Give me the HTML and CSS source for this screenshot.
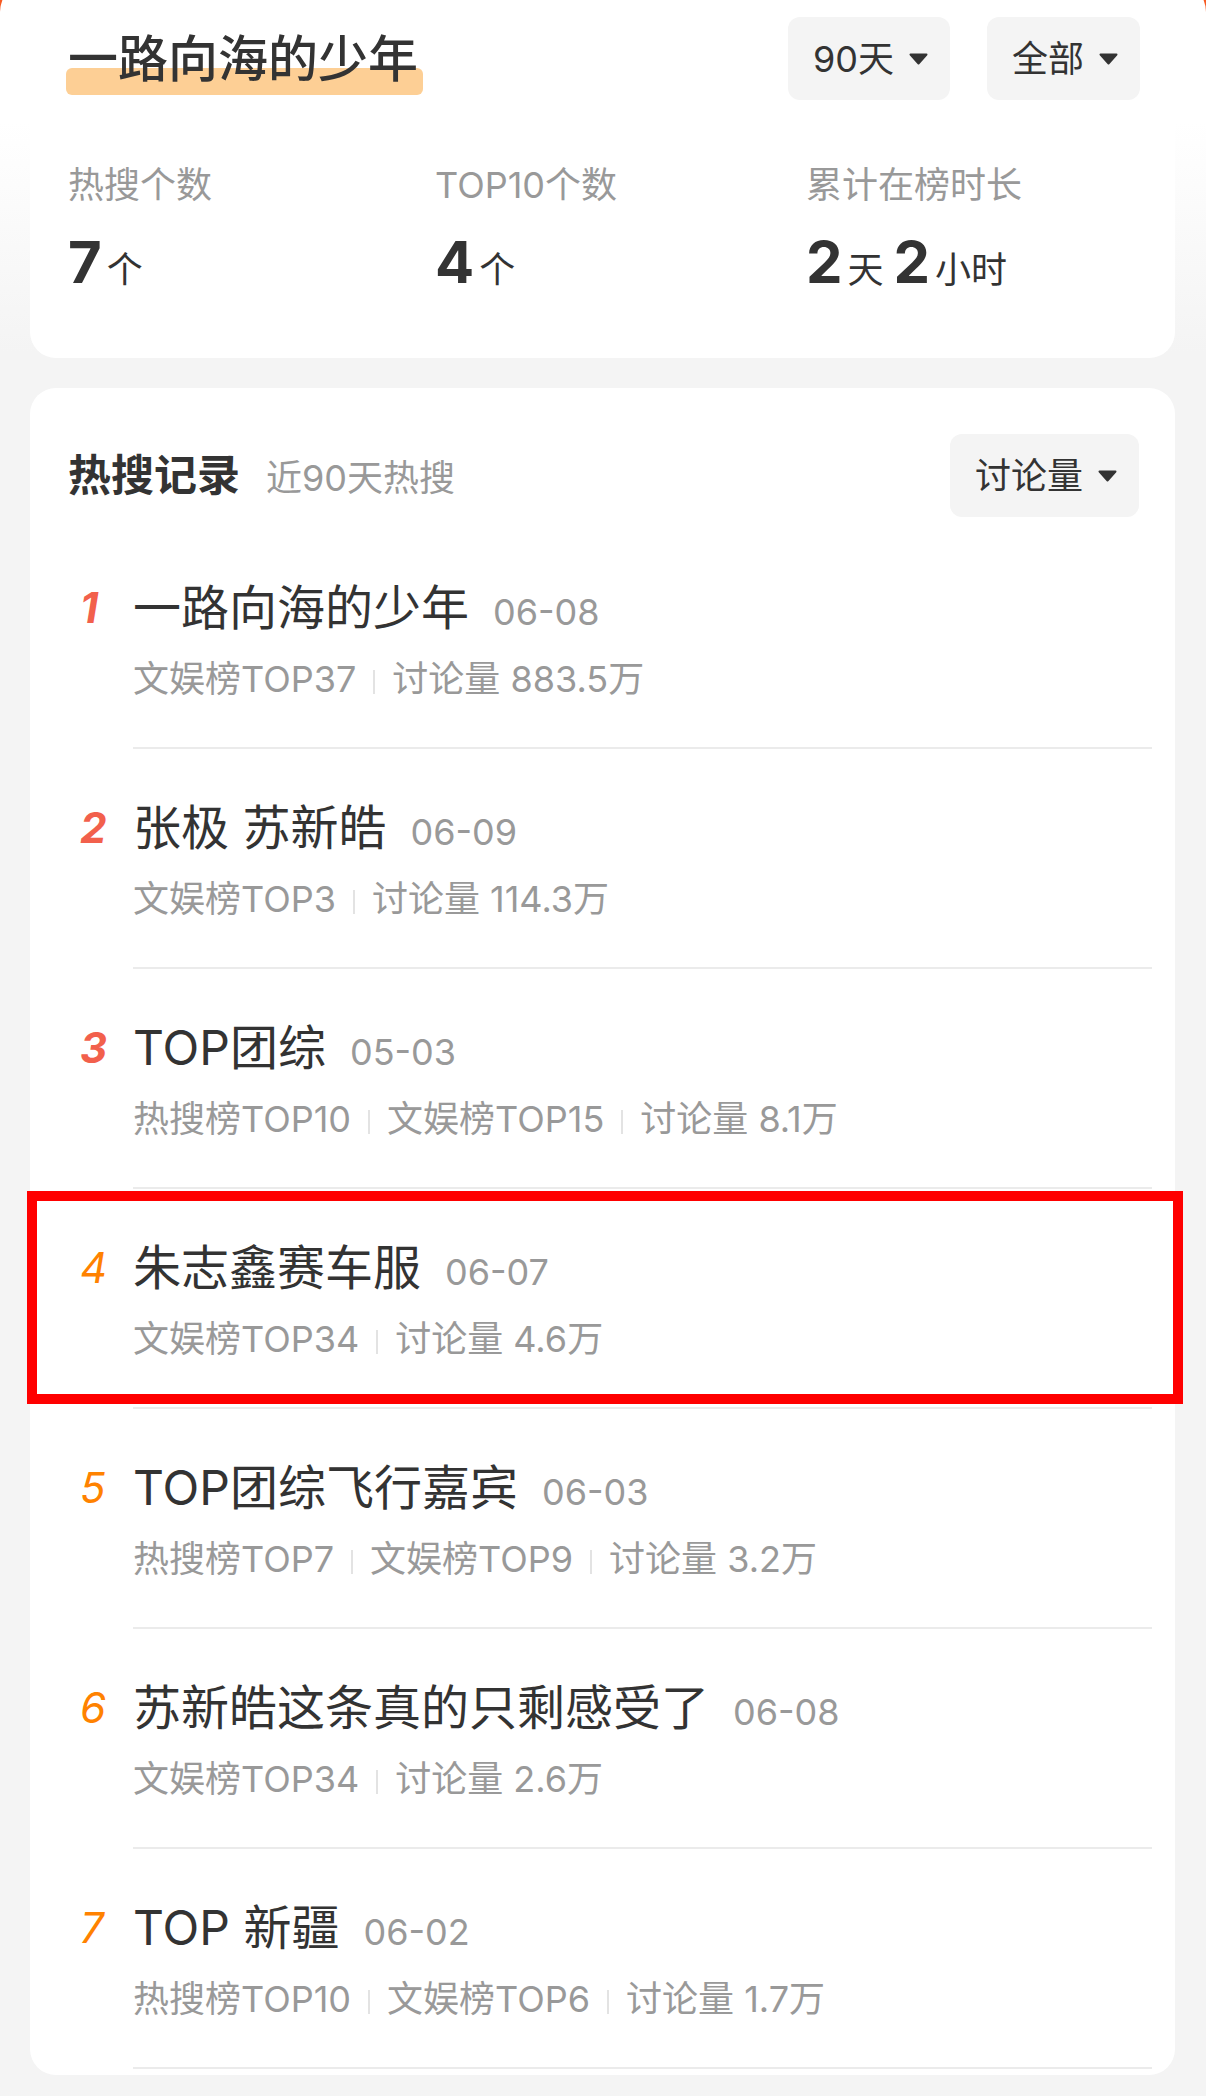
FILE: index.html
```html
<!DOCTYPE html>
<html>
<head>
    <meta charset="utf-8">
    <title>一路向海的少年 - 热搜记录</title>
    <link rel="stylesheet" href="styles.css">
</head>
<body>
    <div class="page">
        <div class="card summary">
            <div class="title-row">
                <h1 class="title">一路向海的少年</h1>
                <div class="filters">
                    <div class="select">90天
                        <svg class="caret" width="19" height="12" viewBox="0 0 19 12"><path d="M1.5 1.5 H17.5 L9.5 10.5 Z" fill="#333" stroke="#333" stroke-width="2" stroke-linejoin="round"/></svg>
                    </div>
                    <div class="select">全部
                        <svg class="caret" width="19" height="12" viewBox="0 0 19 12"><path d="M1.5 1.5 H17.5 L9.5 10.5 Z" fill="#333" stroke="#333" stroke-width="2" stroke-linejoin="round"/></svg>
                    </div>
                </div>
            </div>
            <div class="stats">
                <div class="stat">
                    <div class="stat-label">热搜个数</div>
                    <div class="stat-value"><b>7</b><span>个</span></div>
                </div>
                <div class="stat">
                    <div class="stat-label">TOP10个数</div>
                    <div class="stat-value"><b>4</b><span>个</span></div>
                </div>
                <div class="stat">
                    <div class="stat-label">累计在榜时长</div>
                    <div class="stat-value"><b>2</b><span>天</span><b>2</b><span>小时</span></div>
                </div>
            </div>
        </div>

        <div class="card records">
            <div class="records-head">
                <div class="records-title">
                    <h2>热搜记录</h2>
                    <span class="hint">近90天热搜</span>
                </div>
                <div class="select">讨论量
                    <svg class="caret" width="19" height="12" viewBox="0 0 19 12"><path d="M1.5 1.5 H17.5 L9.5 10.5 Z" fill="#333" stroke="#333" stroke-width="2" stroke-linejoin="round"/></svg>
                </div>
            </div>

            <ul class="list">
                <li class="item hot">
                    <span class="rank">1</span>
                    <div class="entry">
                        <p class="name">一路向海的少年<span class="date">06-08</span></p>
                        <p class="meta"><span>文娱榜TOP37</span><span>讨论量 883.5万</span></p>
                    </div>
                </li>
                <li class="item hot">
                    <span class="rank">2</span>
                    <div class="entry">
                        <p class="name">张极 苏新皓<span class="date">06-09</span></p>
                        <p class="meta"><span>文娱榜TOP3</span><span>讨论量 114.3万</span></p>
                    </div>
                </li>
                <li class="item hot">
                    <span class="rank">3</span>
                    <div class="entry">
                        <p class="name">TOP团综<span class="date">05-03</span></p>
                        <p class="meta"><span>热搜榜TOP10</span><span>文娱榜TOP15</span><span>讨论量 8.1万</span></p>
                    </div>
                </li>
                <li class="item marked">
                    <span class="rank">4</span>
                    <div class="entry">
                        <p class="name">朱志鑫赛车服<span class="date">06-07</span></p>
                        <p class="meta"><span>文娱榜TOP34</span><span>讨论量 4.6万</span></p>
                    </div>
                </li>
                <li class="item">
                    <span class="rank">5</span>
                    <div class="entry">
                        <p class="name">TOP团综飞行嘉宾<span class="date">06-03</span></p>
                        <p class="meta"><span>热搜榜TOP7</span><span>文娱榜TOP9</span><span>讨论量 3.2万</span></p>
                    </div>
                </li>
                <li class="item">
                    <span class="rank">6</span>
                    <div class="entry">
                        <p class="name">苏新皓这条真的只剩感受了<span class="date">06-08</span></p>
                        <p class="meta"><span>文娱榜TOP34</span><span>讨论量 2.6万</span></p>
                    </div>
                </li>
                <li class="item">
                    <span class="rank">7</span>
                    <div class="entry">
                        <p class="name">TOP 新疆<span class="date">06-02</span></p>
                        <p class="meta"><span>热搜榜TOP10</span><span>文娱榜TOP6</span><span>讨论量 1.7万</span></p>
                    </div>
                </li>
            </ul>
        </div>
    </div>
</body>
</html>
```

FILE: styles.css
```css
body {
    margin: 0;
    background: linear-gradient(180deg, #f75a22 0, #f75a22 40px, #f4f4f4 40px);
    font-family: Inter, "Noto Sans CJK SC", sans-serif;
    color: #333;
}

.page {
    margin-top: -18px;
    padding: 18px 31px 24px 30px;
    border-radius: 30px 30px 0 0;
    background: linear-gradient(180deg, #fff 0, #fff 140px, #f4f4f4 370px);
}

.card {
    background: #fff;
    border-radius: 26px;
}

/* summary */

.summary {
    padding: 17px 35px 61px 38px;
    border-radius: 0 0 26px 26px;
}

.title-row {
    display: flex;
    justify-content: space-between;
    align-items: center;
    height: 83px;
}

.title {
    position: relative;
    z-index: 0;
    margin: 0;
    font-size: 50px;
    line-height: 60px;
    font-weight: 500;
    color: #333;
}

.title::before {
    content: '';
    position: absolute;
    left: -2px;
    right: -5px;
    bottom: -6px;
    height: 27px;
    background: #fdcf95;
    border-radius: 6px;
    z-index: -1;
}

.filters {
    display: flex;
    gap: 37px;
}

.select {
    display: flex;
    align-items: center;
    gap: 15px;
    height: 83px;
    padding: 0 22px 0 25px;
    background: #f4f4f4;
    border-radius: 12px;
    font-size: 36px;
    line-height: 1;
    color: #333;
}

.caret {
    display: block;
}

.stats {
    display: grid;
    grid-template-columns: 367px 371px auto;
    margin-top: 61px;
}

.stat-label {
    font-size: 36px;
    line-height: 48px;
    color: #999;
}

.stat-value {
    margin-top: 18px;
    height: 70px;
    font-size: 58px;
    line-height: 70px;
}

.stat-value b {
    font-weight: 700;
    margin-right: 5px;
}

.stat-value span {
    font-size: 36px;
    line-height: 1;
}

.stat-value span + b {
    margin-left: 10px;
}

/* records */

.records {
    margin-top: 30px;
    padding: 46px 23px 6px 38px;
}

.records-head {
    display: flex;
    justify-content: space-between;
    align-items: center;
    height: 83px;
    margin: 0 13px 12px 0;
}

.records-title {
    display: flex;
    align-items: baseline;
    gap: 26px;
}

.records-title h2 {
    margin: 0;
    font-size: 43px;
    line-height: 1;
    font-weight: 700;
    color: #333;
}

.hint {
    font-size: 36px;
    line-height: 1;
    color: #999;
}

.list {
    list-style: none;
    margin: 0;
    padding: 0;
}

.item {
    position: relative;
    display: flex;
}

.rank {
    width: 65px;
    box-sizing: border-box;
    padding: 51px 0 0 12px;
    font-size: 42px;
    line-height: 56px;
    font-style: italic;
    color: #ff8200;
}

.item.hot .rank {
    color: #f2604c;
    font-weight: 700;
}

.entry {
    flex: 1;
    padding: 51px 0 46px;
    border-bottom: 2px solid #ebebeb;
}

.name {
    margin: 0;
    height: 56px;
    font-size: 48px;
    line-height: 56px;
    color: #333;
}

.date {
    margin-left: 24px;
    font-size: 36px;
    line-height: 1;
    color: #999;
}

.meta {
    display: flex;
    align-items: center;
    height: 44px;
    margin: 21px 0 0;
    font-size: 36px;
    line-height: 44px;
    color: #999;
}

.meta span + span::before {
    content: '';
    display: inline-block;
    width: 2px;
    height: 24px;
    margin: 0 17px;
    background: #e3e3e3;
    vertical-align: -2px;
}

.item.marked::after {
    content: '';
    position: absolute;
    top: 2px;
    bottom: 5px;
    left: -41px;
    right: -31px;
    border: 10px solid #ff0000;
}
```
